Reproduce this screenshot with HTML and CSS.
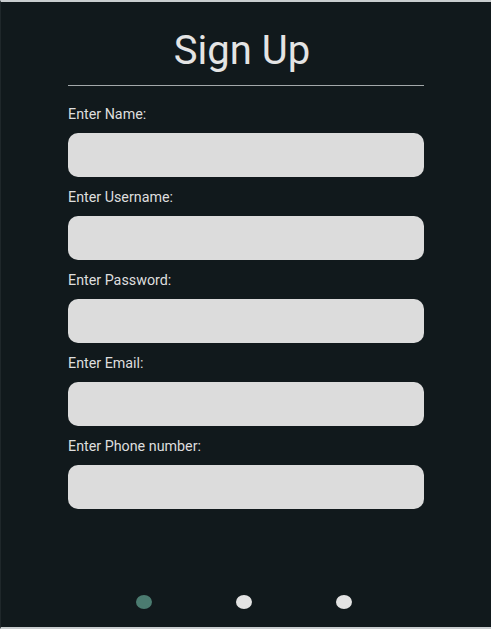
FILE: index.html
```html
<!DOCTYPE html>
<html lang="en">
<head>
<meta charset="utf-8">
<title>Sign Up</title>
<link rel="stylesheet" href="styles.css">
</head>
<body>
<main class="screen">
  <form class="form">
    <h1 class="title">Sign Up</h1>
    <div class="field">
      <label class="label" for="name">Enter Name:</label>
      <input class="input" id="name" type="text">
    </div>
    <div class="field">
      <label class="label" for="username">Enter Username:</label>
      <input class="input" id="username" type="text">
    </div>
    <div class="field">
      <label class="label" for="password">Enter Password:</label>
      <input class="input" id="password" type="password">
    </div>
    <div class="field">
      <label class="label" for="email">Enter Email:</label>
      <input class="input" id="email" type="email">
    </div>
    <div class="field">
      <label class="label" for="phone">Enter Phone number:</label>
      <input class="input" id="phone" type="tel">
    </div>
  </form>
  <div class="dots">
    <span class="dot dot-active"></span>
    <span class="dot"></span>
    <span class="dot"></span>
  </div>
</main>
</body>
</html>
```
FILE: styles.css
```css
* { box-sizing: border-box; }
html, body { margin: 0; padding: 0; }
body {
  background: #11191c;
  font-family: Roboto, "Liberation Sans", sans-serif;
}
.screen {
  height: 629px;
  border-top: 2px solid #c9cdcf;
  border-bottom: 2px solid #c9cdcf;
  border-left: 1px solid #1f272a;
  display: flex;
  flex-direction: column;
  align-items: center;
}
.form {
  width: 356px;
  margin-top: 25px;
  display: flex;
  flex-direction: column;
}
.title {
  margin: 0 0 20px;
  padding: 0 8px 10px 0;
  border-bottom: 1.5px solid #a3a8aa;
  font-size: 40px;
  line-height: 48px;
  font-weight: 400;
  color: #e4e4e4;
  text-align: center;
}
.field {
  display: flex;
  flex-direction: column;
  gap: 11px;
  margin-bottom: 12px;
}
.label {
  font-size: 14.3px;
  line-height: 16px;
  color: #dedede;
}
.input {
  height: 44px;
  border: none;
  border-radius: 10px;
  background: #dcdcdc;
  outline: none;
  margin: 0;
}
.dots {
  margin-top: auto;
  margin-bottom: 18px;
  margin-right: 5px;
  display: flex;
  gap: 84px;
}
.dot {
  width: 16px;
  height: 14px;
  border-radius: 50%;
  background: #e3e3e3;
}
.dot-active { background: #4b7b70; }
```
